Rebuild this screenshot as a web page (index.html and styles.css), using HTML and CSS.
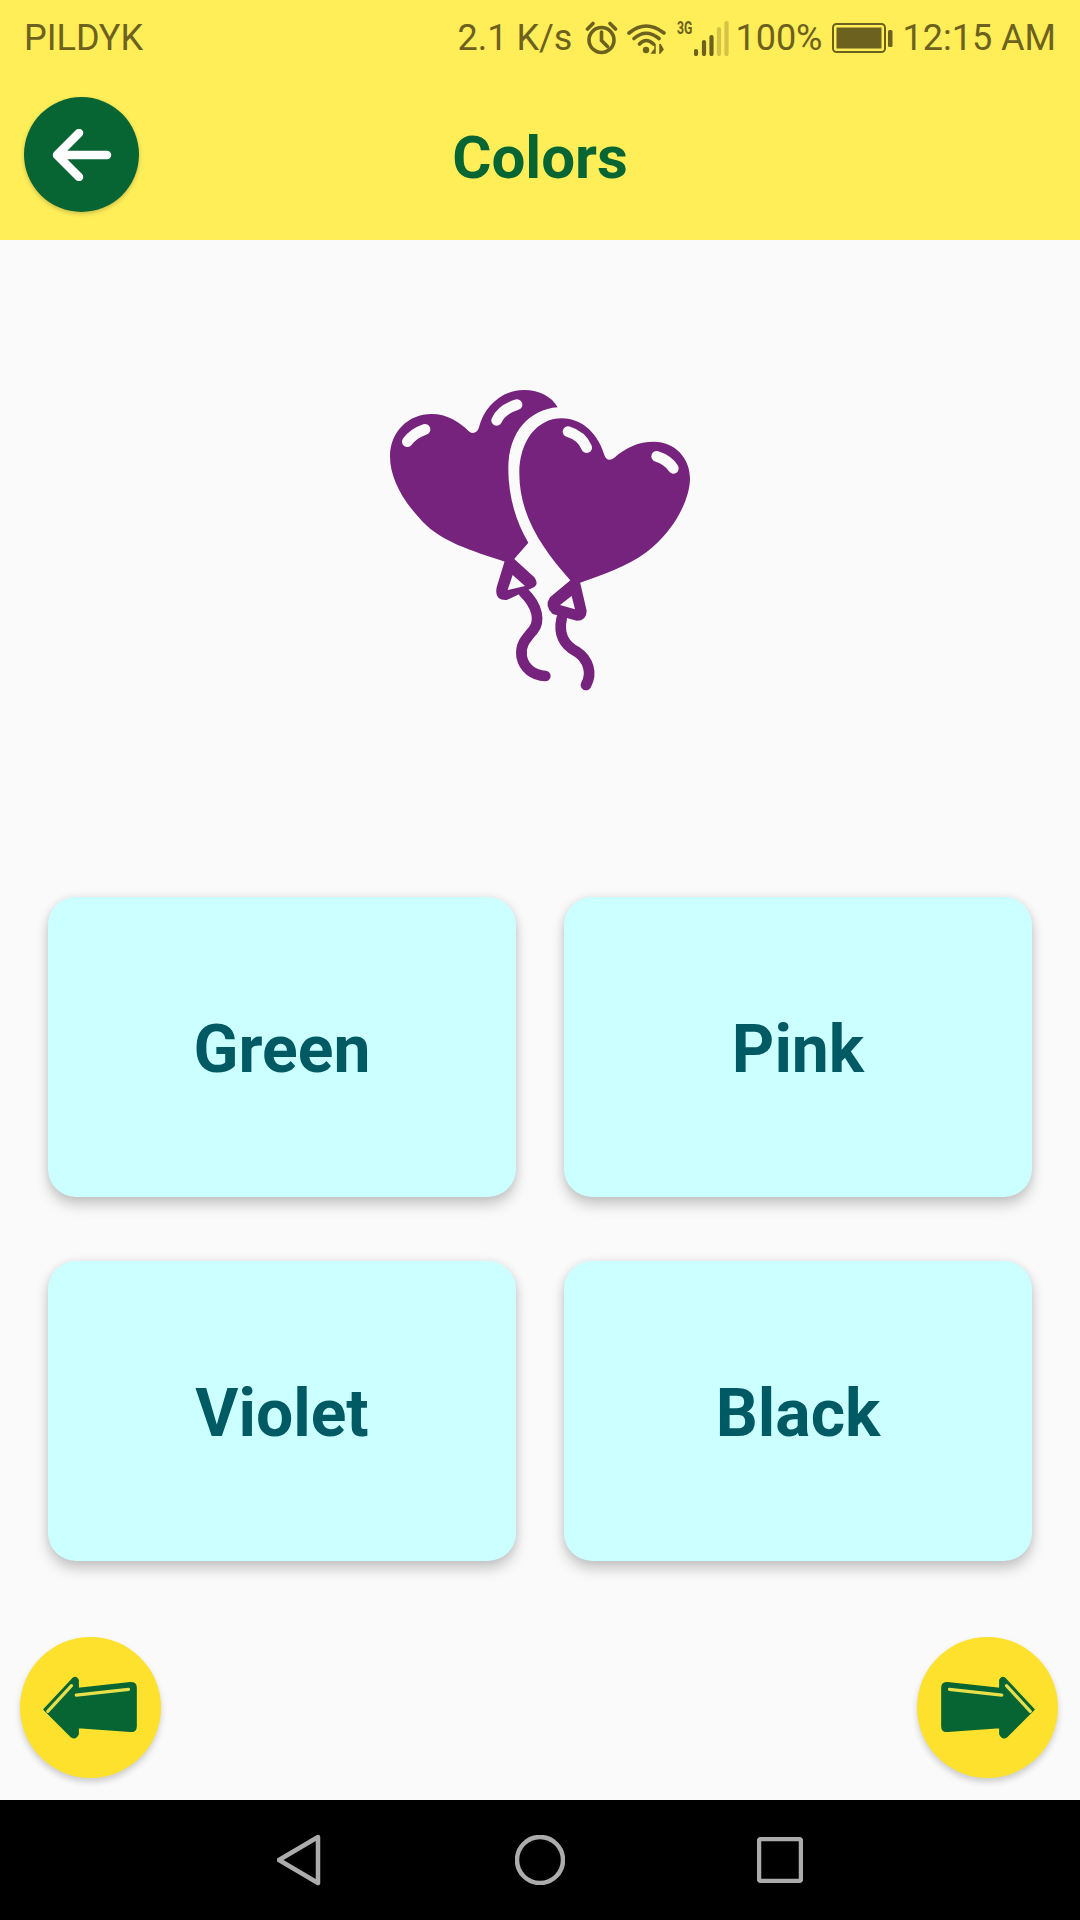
FILE: index.html
```html
<!DOCTYPE html>
<html lang="en">
<head>
<meta charset="utf-8">
<title>Colors</title>
<link rel="stylesheet" href="styles.css">
</head>
<body>
<div class="screen">
  <header class="header">
    <div class="status">
      <span class="carrier">PILDYK</span>
      <div class="status-right">
        <span class="speed">2.1 K/s</span>
        <svg class="ic-alarm" viewBox="0 0 33 34"><circle cx="16.500" cy="19" r="12.500" class="st-line"/><path d="M16.500 11V19.500l6 6" class="st-line"/><path d="M2.500 8 8 2.500M30.500 8 25 2.500" class="st-line"/></svg>
        <svg class="ic-wifi" viewBox="0 0 39 32"><path d="M2 11Q19-3 37 11M7 16.500Q19 6 32 16.500M12.500 22Q19 15 26.500 22" class="st-line"/><circle cx="19" cy="28" r="3.200" class="st-fill"/><path d="M28 22v9M25 31l3-4v4zM33 22v9l3-3.500z" class="st-thin"/></svg>
        <div class="signal">
          <span class="net">3G</span>
          <svg class="ic-bars" viewBox="0 0 35 36"><path d="M2 31v3M10 22v12M17.500 17v17" class="st-bar"/><path d="M25 9v25M32.500 3v31" class="st-bar st-dim"/></svg>
        </div>
        <span class="pct">100%</span>
        <svg class="ic-batt" viewBox="0 0 61 30"><rect x="1" y="1" width="52" height="28" rx="3.500" class="batt-shell"/><rect x="4.500" y="4.500" width="45" height="21" class="st-fill"/><rect x="56" y="7" width="4.500" height="17" rx="1.500" class="st-fill"/></svg>
        <span class="clock">12:15 AM</span>
      </div>
    </div>
    <div class="toolbar">
      <button class="back" type="button" aria-label="Back">
        <svg class="ic-back" viewBox="0 0 60 52"><path d="M27 4 5 26l22 22M6 26h49"/></svg>
      </button>
      <h1 class="title">Colors</h1>
    </div>
  </header>

  <main class="content">
    <svg class="balloons" viewBox="0 0 1020 1020">
      <path class="bl" d="M405 575C300 540 215 515 158 455C95 390 60 320 60 260C60 185 115 132 185 132C230 132 268 155 298 185C310 194 322 188 327 172C342 110 395 60 462 60C510 60 545 80 563 112C480 118 415 185 415 295C415 375 435 450 475 518L432 568Z"/>
      <path class="bl" d="M602 632C520 540 448 440 448 310C448 215 500 145 575 145C640 145 685 195 703 255C708 272 722 272 733 263C768 232 805 215 852 215C915 215 960 265 960 325C960 395 905 490 830 546C770 590 705 612 630 638Z"/>
      <g class="bl-hi">
        <path d="M112 215Q130 190 165 178"/>
        <path d="M380 151Q395 118 441 104"/>
        <path d="M594 185Q635 197 650 233"/>
        <path d="M860 259Q895 270 910 295"/>
      </g>
      <path class="bl knot" d="M405 570 432 566 493 622Q510 645 485 655L410 690Q372 692 380 652ZM428 615 413 660 465 648Z"/>
      <path class="bl knot" d="M602 630 630 636 650 722Q650 752 620 752L548 732Q522 708 540 682ZM605 678 570 705 615 718Z"/>
      <g class="bl-line">
        <path d="M462 668C505 710 510 755 490 780C465 810 450 825 455 860C462 895 490 916 526 918"/>
        <path d="M575 745C565 790 580 825 620 845C655 868 668 910 648 945"/>
      </g>
    </svg>

    <div class="answers">
      <button class="card" type="button">Green</button>
      <button class="card" type="button">Pink</button>
      <button class="card" type="button">Violet</button>
      <button class="card" type="button">Black</button>
    </div>

    <div class="pager">
      <button class="fab" type="button" aria-label="Previous">
        <svg class="ic-arrow" viewBox="0 0 100 64"><path class="ar" d="M1 34 32 1Q35-1 37 3V12L92 6Q98 6 98 11V52Q98 58 92 57L37 53V60Q34 66 30 63Z"/><path class="ar-hi" d="M5 36 30 9M35 19 90 13"/></svg>
      </button>
      <button class="fab" type="button" aria-label="Next">
        <svg class="ic-arrow flip" viewBox="0 0 100 64"><path class="ar" d="M1 34 32 1Q35-1 37 3V12L92 6Q98 6 98 11V52Q98 58 92 57L37 53V60Q34 66 30 63Z"/><path class="ar-hi" d="M5 36 30 9M35 19 90 13"/></svg>
      </button>
    </div>
  </main>

  <nav class="nav">
    <svg class="nav-back" viewBox="0 0 44 52"><path d="M41 3 2 26 41 49Z"/></svg>
    <svg class="nav-home" viewBox="0 0 50 50"><circle cx="25" cy="25" r="23"/></svg>
    <svg class="nav-recent" viewBox="0 0 46 46"><rect x="2" y="2" width="42" height="42" rx="2"/></svg>
  </nav>
</div>
</body>
</html>
```
FILE: styles.css
```css
* { box-sizing: border-box; }
html, body { margin: 0; padding: 0; }
body { font-family: Roboto, "Liberation Sans", sans-serif; background: #fafafa; }
button { font-family: inherit; border: 0; padding: 0; cursor: pointer; }

.screen { width: 1080px; height: 1920px; display: flex; flex-direction: column; overflow: hidden; }

.header { height: 240px; background: #ffee58; flex: none; display: flex; flex-direction: column; }
.status { height: 76px; padding: 0 24px 0 24px; display: flex; align-items: center; justify-content: space-between; color: #6d611f; font-size: 36px; flex: none; }
.status-right { display: flex; align-items: center; }
.speed { margin-right: 13px; }
.ic-alarm { width: 33px; height: 34px; margin-right: 9px; }
.ic-wifi { width: 39px; height: 32px; margin-right: 11px; }
.signal { width: 52px; height: 38px; position: relative; margin-right: 6px; }
.net { display: block; font-size: 18px; font-weight: 700; line-height: 18px; transform: scaleX(.68); transform-origin: left top; }
.ic-bars { width: 35px; height: 36px; position: absolute; right: 0; top: 1px; }
.ic-batt { width: 61px; height: 30px; margin: 0 10px 0 9px; }
.st-line { fill: none; stroke: #6d611f; stroke-width: 3.600; stroke-linecap: round; }
.st-thin { fill: #6d611f; stroke: #6d611f; stroke-width: 1.500; }
.st-fill { fill: #6d611f; }
.st-bar { fill: none; stroke: #6d611f; stroke-width: 4.200; stroke-linecap: round; }
.st-dim { opacity: .3; }
.batt-shell { fill: none; stroke: #6d611f; stroke-width: 2; }

.toolbar { flex: 1; position: relative; display: flex; align-items: center; padding: 0 0 6px 24px; }
.back { width: 115px; height: 115px; border-radius: 50%; background: #066533; box-shadow: 0 2px 4px rgba(0,0,0,.2); display: flex; align-items: center; justify-content: center; margin-top: -1px; }
.ic-back { width: 60px; height: 52px; fill: none; stroke: #fff; stroke-width: 8.500; stroke-linecap: round; stroke-linejoin: round; }
.title { position: absolute; left: 0; right: 0; top: 50%; margin: 0; transform: translateY(-50%); text-align: center; font-size: 60px; font-weight: 700; color: #066533; line-height: 1; pointer-events: none; }

.content { flex: 1; min-height: 0; display: flex; flex-direction: column; }
.balloons { width: 340px; height: 340px; flex: none; margin: 130px 0 0 370px; }
.bl { fill: #76237d; }
.knot { fill-rule: evenodd; }
.bl-hi path { fill: none; stroke: #fafafa; stroke-width: 32; stroke-linecap: round; }
.bl-line path { fill: none; stroke: #76237d; stroke-width: 32; stroke-linecap: round; stroke-linejoin: round; }

.answers { margin-top: 187px; padding: 0 48px; display: grid; grid-template-columns: 1fr 1fr; gap: 64px 48px; flex: none; }
.card { height: 300px; padding-top: 5px; border-radius: 28px; background: #ccffff; color: #005a64; font-size: 66px; font-weight: 700; box-shadow: 0 8px 14px rgba(0,0,0,.2), 0 0 8px rgba(0,0,0,.08); }

.pager { margin-top: 76px; padding: 0 22px 0 20px; display: flex; justify-content: space-between; flex: none; }
.fab { width: 141px; height: 141px; border-radius: 50%; background: #fde12d; box-shadow: 0 4px 6px rgba(0,0,0,.18); display: flex; align-items: center; justify-content: center; }
.ic-arrow { width: 95px; height: 61px; overflow: visible; }
.flip { transform: scaleX(-1); }
.ar { fill: #066533; stroke: #066533; stroke-width: 1.500; stroke-linejoin: round; }
.ar-hi { fill: none; stroke: #e8e04a; stroke-width: 3.400; stroke-linecap: round; }

.nav { height: 120px; background: #000; flex: none; display: flex; align-items: center; padding: 0 0 0 277px; margin-top: auto; }
.nav svg { fill: none; stroke: #acacac; stroke-width: 4.500; stroke-linejoin: round; flex: none; }
.nav-back { width: 44px; height: 52px; margin-right: 194px; }
.nav-home { width: 50px; height: 50px; margin-right: 192px; }
.nav-recent { width: 46px; height: 46px; }
```
